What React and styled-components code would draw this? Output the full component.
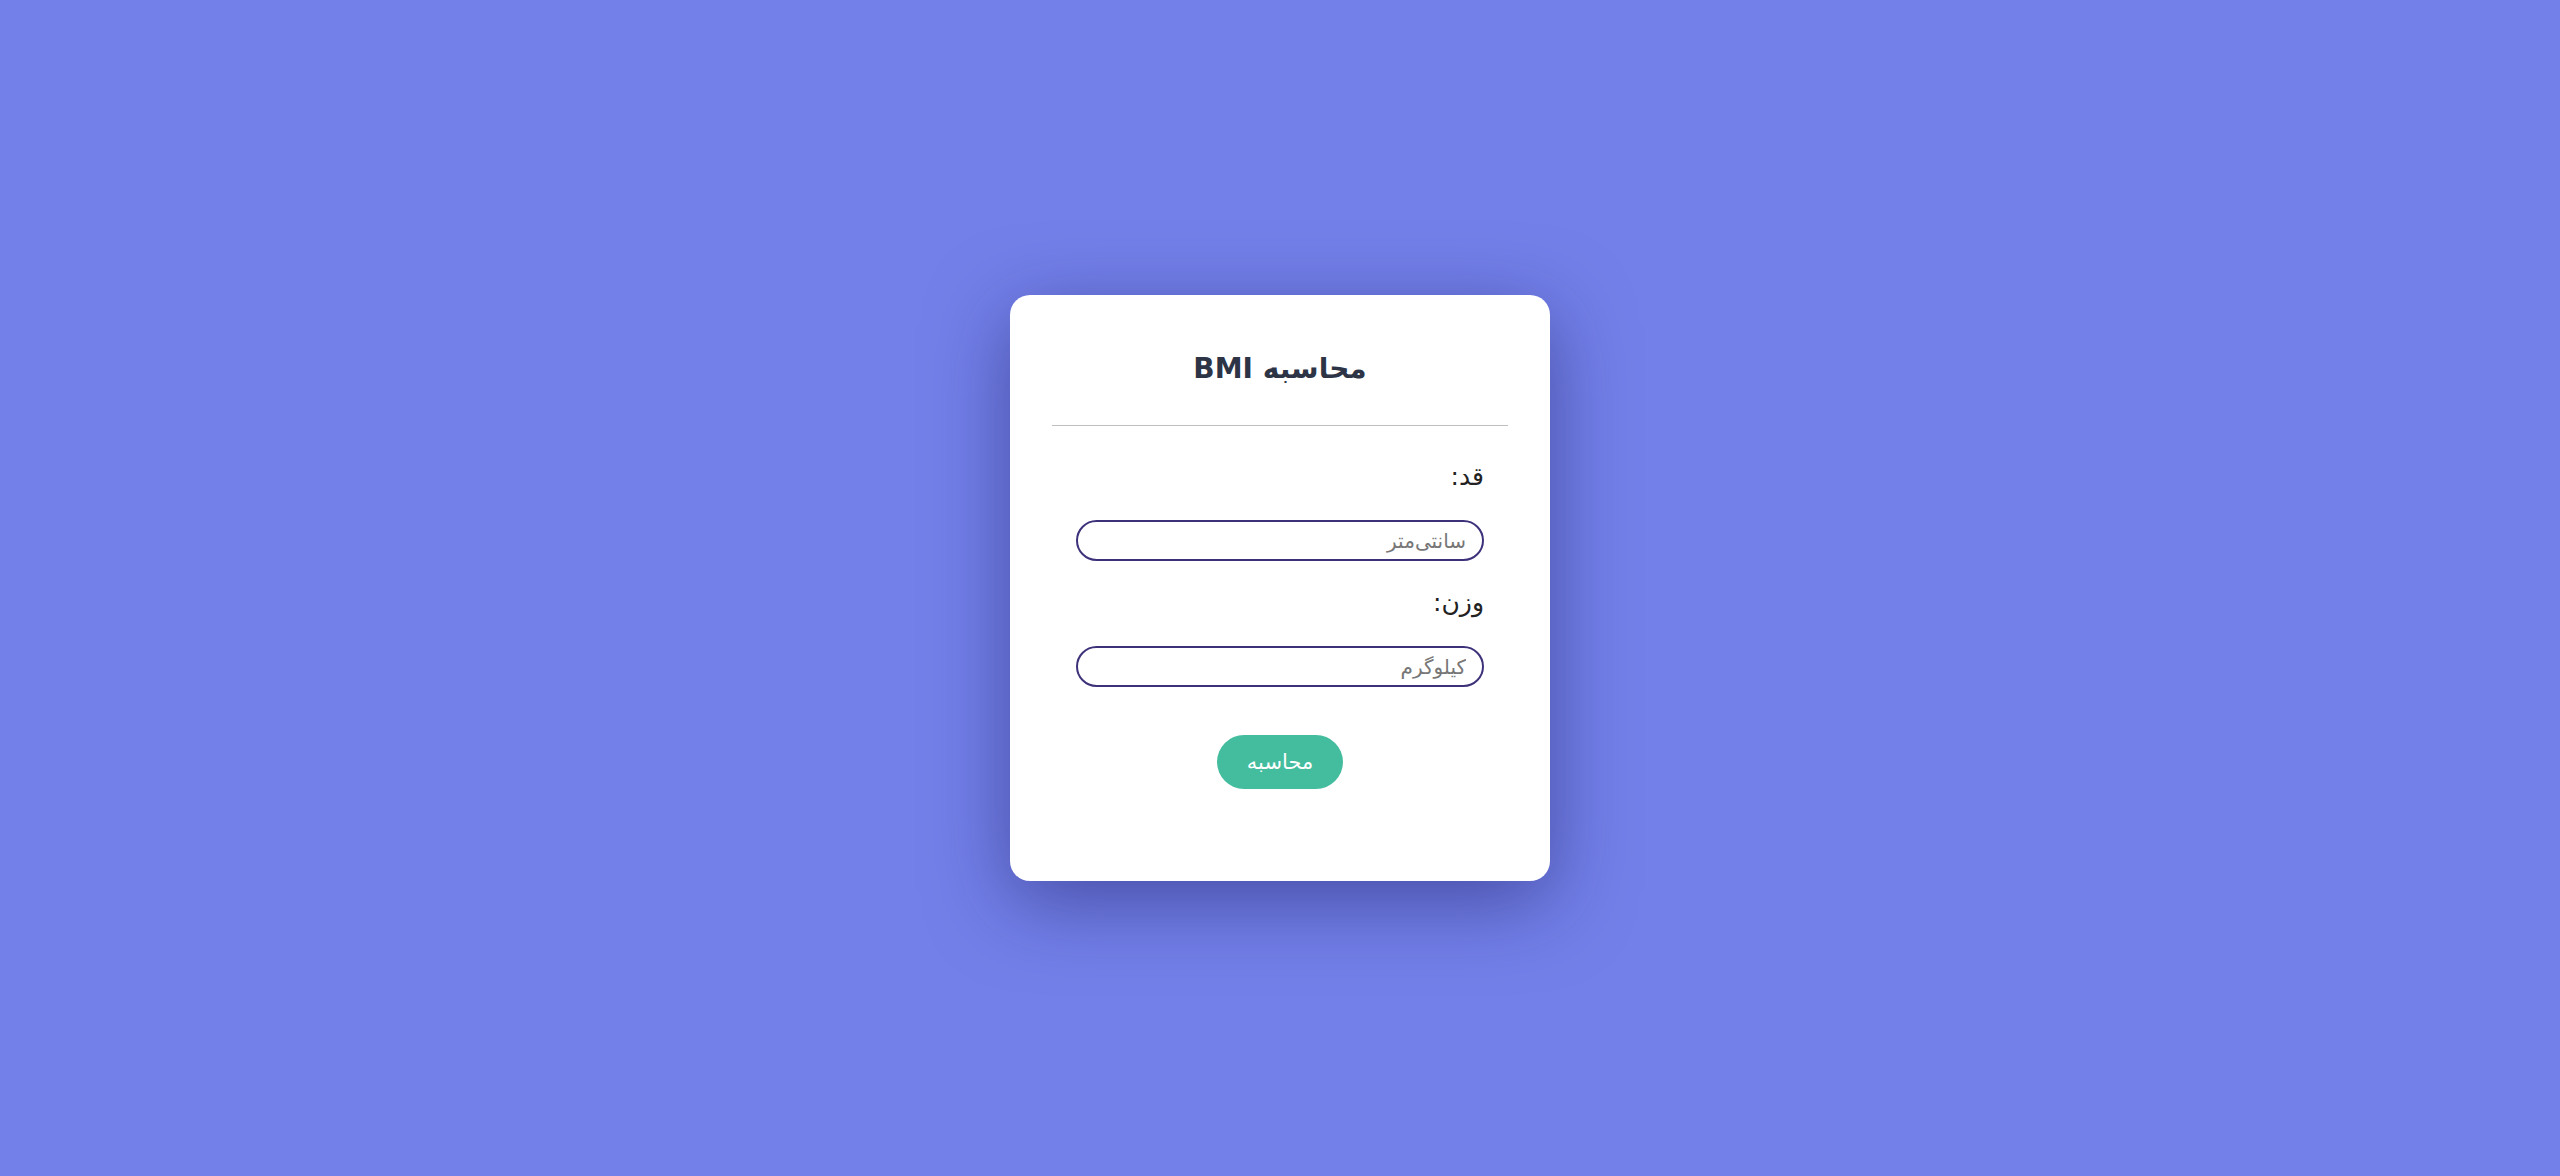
import styled, { createGlobalStyle } from 'styled-components'

const GlobalStyle = createGlobalStyle`
    * {
        box-sizing: border-box;
    }
    body {
        margin: 0;
        background-color: #7380e9;
        font-family: 'DejaVu Sans', 'Noto Sans', sans-serif;
    }
`

export default function App() {
    return (
        <>
            <GlobalStyle />
            <Page>
                <Card dir="rtl">
                    <Header>
                        <h1>محاسبه BMI</h1>
                    </Header>
                    <Form>
                        <Label htmlFor="height">قد:</Label>
                        <Input id="height" type="text" placeholder="سانتی‌متر" />
                        <Label htmlFor="weight">وزن:</Label>
                        <Input id="weight" type="text" placeholder="کیلوگرم" />
                        <Button type="button">محاسبه</Button>
                    </Form>
                </Card>
            </Page>
        </>
    )
}

const Page = styled.div`
    display: flex;
    justify-content: center;
    align-items: center;
    min-height: 100vh;
`

const Card = styled.div`
    width: 540px;
    height: 586px;
    padding: 0 42px;
    background-color: white;
    border-radius: 20px;
    box-shadow: 0 20px 80px rgba(25, 25, 95, 0.5);
`

const Header = styled.div`
    height: 131px;
    display: flex;
    justify-content: center;
    align-items: flex-end;
    padding-bottom: 40px;
    border-bottom: 1px solid #bfbfbf;
    h1 {
        margin: 0;
        font-size: 28px;
        font-weight: 700;
        color: #2d3446;
    }
`

const Form = styled.div`
    display: flex;
    flex-direction: column;
    align-items: stretch;
    padding: 36px 24px 0;
`

const Label = styled.label`
    font-size: 25px;
    color: #222;
    line-height: 30px;
    margin-bottom: 28px;
`

const Input = styled.input`
    height: 41px;
    border: 2px solid #3d327a;
    border-radius: 21px;
    padding: 0 16px;
    font-family: 'DejaVu Sans', sans-serif;
    font-size: 20px;
    margin-bottom: 27px;
    outline: none;
    &::placeholder {
        color: #777;
    }
`

const Button = styled.button`
    align-self: center;
    width: 126px;
    height: 54px;
    margin-top: 21px;
    border: none;
    border-radius: 27px;
    background-color: #44bd9f;
    color: white;
    font-family: 'DejaVu Sans', sans-serif;
    font-size: 21px;
    cursor: pointer;
`
